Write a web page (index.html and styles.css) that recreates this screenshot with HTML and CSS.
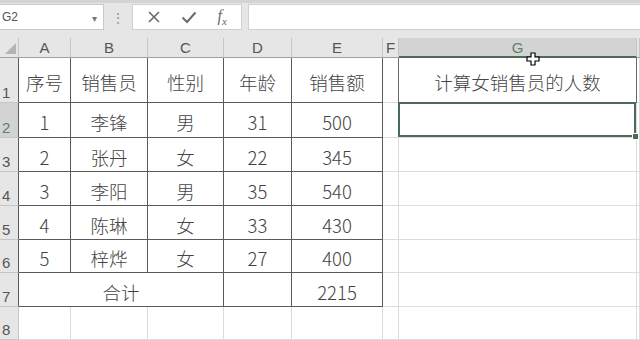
FILE: index.html
```html
<!DOCTYPE html>
<html lang="zh">
<head>
  <meta charset="UTF-8">
  <title>销售员统计</title>
  <link rel="stylesheet" href="styles.css">
</head>
<body>
  <div class="formula-bar">
    <div class="name-box">
      <span class="name-text">G2</span>
      <span class="name-arrow">▾</span>
    </div>
    <div class="grip">⋮</div>
    <div class="fx-buttons">
      <svg class="fx-icon" width="14" height="14" viewBox="0 0 14 14"><path d="M2 2 L12 12 M12 2 L2 12" stroke="#6a6a6a" stroke-width="1.6" fill="none"/></svg>
      <svg class="fx-icon" width="16" height="14" viewBox="0 0 16 14"><path d="M1.5 7.5 L6 12 L14.5 2.5" stroke="#6a6a6a" stroke-width="2" fill="none"/></svg>
      <span class="fx-text">f<sub>x</sub></span>
    </div>
    <div class="formula-input"></div>
  </div>

  <div class="sheet">
    <div class="hdr corner"><span class="tri"></span></div>
    <div class="hdr">A</div>
    <div class="hdr">B</div>
    <div class="hdr">C</div>
    <div class="hdr">D</div>
    <div class="hdr">E</div>
    <div class="hdr">F</div>
    <div class="hdr sel-col">G</div>
    <div class="hdr"></div>

    <div class="rh tr">1</div>
    <div class="c t">序号</div>
    <div class="c t">销售员</div>
    <div class="c t">性别</div>
    <div class="c t">年龄</div>
    <div class="c t">销售额</div>
    <div class="c f-edge"></div>
    <div class="c g1">计算女销售员的人数</div>
    <div class="c"></div>

    <div class="rh tr sel-row">2</div>
    <div class="c t">1</div>
    <div class="c t">李锋</div>
    <div class="c t">男</div>
    <div class="c t">31</div>
    <div class="c t">500</div>
    <div class="c"></div>
    <div class="c active"><span class="handle"></span></div>
    <div class="c"></div>

    <div class="rh tr">3</div>
    <div class="c t">2</div>
    <div class="c t">张丹</div>
    <div class="c t">女</div>
    <div class="c t">22</div>
    <div class="c t">345</div>
    <div class="c"></div>
    <div class="c"></div>
    <div class="c"></div>

    <div class="rh tr">4</div>
    <div class="c t">3</div>
    <div class="c t">李阳</div>
    <div class="c t">男</div>
    <div class="c t">35</div>
    <div class="c t">540</div>
    <div class="c"></div>
    <div class="c"></div>
    <div class="c"></div>

    <div class="rh tr">5</div>
    <div class="c t">4</div>
    <div class="c t">陈琳</div>
    <div class="c t">女</div>
    <div class="c t">33</div>
    <div class="c t">430</div>
    <div class="c"></div>
    <div class="c"></div>
    <div class="c"></div>

    <div class="rh tr">6</div>
    <div class="c t">5</div>
    <div class="c t">梓烨</div>
    <div class="c t">女</div>
    <div class="c t">27</div>
    <div class="c t">400</div>
    <div class="c"></div>
    <div class="c"></div>
    <div class="c"></div>

    <div class="rh tr">7</div>
    <div class="c t span3">合计</div>
    <div class="c t"></div>
    <div class="c t">2215</div>
    <div class="c"></div>
    <div class="c"></div>
    <div class="c"></div>

    <div class="rh">8</div>
    <div class="c"></div>
    <div class="c"></div>
    <div class="c"></div>
    <div class="c"></div>
    <div class="c"></div>
    <div class="c"></div>
    <div class="c"></div>
    <div class="c"></div>
  </div>

  <svg class="cursor" width="14" height="14" viewBox="0 0 14 14">
    <path d="M5 1 H9 V5 H13 V9 H9 V13 H5 V9 H1 V5 H5 Z" fill="#fff" stroke="#000" stroke-width="1.2"/>
  </svg>
</body>
</html>
```

FILE: styles.css
```css
body { margin: 0; width: 640px; height: 340px; overflow: hidden; background: #fff; font-family: "Noto Sans CJK SC", "Noto Sans", sans-serif; color: #444; position: relative; }

.formula-bar { height: 38px; background: #e6e6e6; border-top: 3px solid #d4d4d4; box-sizing: border-box; display: flex; align-items: flex-start; padding-top: 1px; }
.name-box { width: 104px; height: 26px; background: #fff; border: 1px solid #c8c8c8; border-left: none; box-sizing: border-box; display: flex; align-items: center; justify-content: space-between; padding: 0 6px 0 2px; }
.name-text { font-family: "Liberation Sans", sans-serif; font-size: 12px; color: #555; }
.name-arrow { font-size: 10px; color: #777; }
.grip { width: 28px; text-align: center; color: #999; font-size: 14px; line-height: 26px; }
.fx-buttons { width: 110px; height: 26px; background: #fff; border: 1px solid #d0d0d0; box-sizing: border-box; display: flex; align-items: center; justify-content: space-around; padding: 0 4px; }
.fx-text { font-family: "Liberation Serif", serif; font-style: italic; font-size: 16px; color: #6a6a6a; }
.fx-text sub { font-size: 11px; }
.formula-input { flex: 1; height: 26px; margin-left: 6px; background: #fff; border: 1px solid #d0d0d0; border-right: none; box-sizing: border-box; }

.sheet { display: grid; grid-template-columns: 19px 52px 77px 76px 68px 91px 16px 238px 1fr; grid-template-rows: 20px 45px 35px 34px 34px 34px 33px 34px 33px; }
.sheet > div { box-sizing: border-box; }

.hdr { background: #e6e6e6; border-right: 1px solid #c6c6c6; border-bottom: 1px solid #9f9f9f; font-family: "Liberation Sans", sans-serif; font-size: 15px; color: #555; display: flex; align-items: center; justify-content: center; }
.corner { position: relative; }
.tri { position: absolute; right: 2px; bottom: 3px; width: 0; height: 0; border-left: 11px solid transparent; border-bottom: 11px solid #b4b4b4; }
.sel-col { background: #d3d3d3; color: #5f7f6c; border-bottom: 2px solid #4a6b58; }

.rh { background: #e6e6e6; border-right: 1px solid #c6c6c6; border-bottom: 1px solid #c6c6c6; font-family: "Liberation Sans", sans-serif; font-size: 15px; color: #555; display: flex; align-items: flex-end; padding: 0 0 1px 2px; }
.rh.tr { border-right-color: #5a5a5a; }
.sel-row { background: #d3d3d3; color: #5f7f6c; }

.c { border-right: 1px solid #dcdcdc; border-bottom: 1px solid #dcdcdc; display: flex; align-items: center; justify-content: center; padding-top: 4px; font-size: 18.5px; font-weight: 300; color: #444; white-space: nowrap; }
.c.t { border-right-color: #5a5a5a; border-bottom-color: #5a5a5a; }
.span3 { grid-column: span 3; }
.f-edge { border-right-color: #6a6a6a; }
.g1 { border-right-color: #6a6a6a; border-bottom-color: #6a6a6a; }
.active { position: relative; }
.active::before { content: ""; position: absolute; left: -1px; top: -1px; right: 0; bottom: 0; border: 2px solid #4a6b58; }
.handle { position: absolute; right: -3px; bottom: -3px; width: 5px; height: 5px; background: #4a6b58; border: 1px solid #fff; }

.cursor { position: absolute; left: 526px; top: 52px; }
```
